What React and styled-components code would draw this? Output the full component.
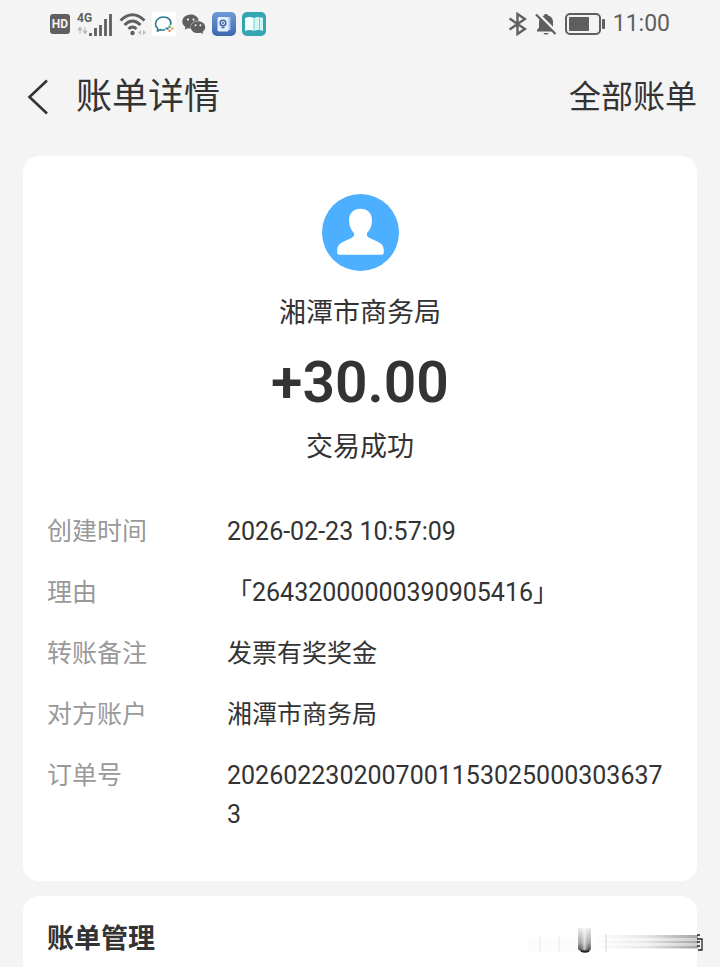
import React from 'react';
import styled, {createGlobalStyle} from 'styled-components';

const details = [
    {label: '创建时间', value: '2026-02-23 10:57:09'},
    {label: '理由', value: '「26432000000390905416」'},
    {label: '转账备注', value: '发票有奖奖金'},
    {label: '对方账户', value: '湘潭市商务局'},
    {label: '订单号', value: '20260223020070011530250003036373'},
]

function StatusBar() {
    return (
        <StatusWrapper>
            <IconGroup $gap={6}>
                <svg width="20" height="20" viewBox="0 0 20 20">
                    <rect width="20" height="20" rx="3" fill="#5f5f5f"/>
                    <text x="10" y="14" textAnchor="middle" fontSize="12" fontWeight="700" fill="#f4f4f4">HD</text>
                </svg>
                <svg width="36" height="24" viewBox="-1 0 36 24">
                    <text x="0" y="10" fontSize="12" fontWeight="700" fill="#5f5f5f">4G</text>
                    <path d="M1 18l2-3 2 3zM3 18v4M6 19l2 3 2-3zM8 19v-4" fill="#bbb" stroke="#bbb"/>
                    <path d="M13.5 21v3M18.5 16v8M23.5 13v11M28.5 7v17M33.5 2v22" stroke="#5f5f5f" strokeWidth="2.8"/>
                </svg>
                <svg width="28" height="24" viewBox="-1 0 28 24" fill="none">
                    <path d="M1.5 8.5Q13.5 -3 25.5 8.5M5.5 13Q13.5 5 21.5 13M9.5 17Q13.5 13 17.5 17" stroke="#5f5f5f" strokeWidth="2.8"/>
                    <circle cx="13.5" cy="21" r="2.2" fill="#5f5f5f"/>
                    <path d="M19 20.5l3-2.5v5zM27 20.5l-3-2.5v5z" fill="#bbb"/>
                </svg>
                <svg width="24" height="24" viewBox="0 0 24 24" fill="none">
                    <rect width="24" height="24" fill="#fff"/>
                    <path d="M18.5 13C20 8 16 5 11.500 5S3.500 8 3.500 12c0 2 1 3.500 2.200 4.500L5.500 19l3-1.300c1.500.4 3 .4 4.500.1" stroke="#2b7890" strokeWidth="1.600"/>
                    <path d="M17.500 13.500v2.500" stroke="#5aa63c" strokeWidth="2"/>
                    <path d="M13.500 16.500h3" stroke="#2b7890" strokeWidth="2"/>
                    <path d="M19 16.500h2.500" stroke="#e9a52c" strokeWidth="2"/>
                    <path d="M17.500 17.500v2.500" stroke="#e9823c" strokeWidth="2"/>
                </svg>
                <svg width="24" height="24" viewBox="1 0 24 24" fill="#5f5f5f">
                    <path d="M10 2.500C5 2.500 1.300 5.600 1.300 9.600c0 2.300 1.200 4.200 3.200 5.500l-.8 2.700 3.100-1.600c1 .3 2 .4 3 .4-1.200-4.600 2.700-8.200 8-8.200C17 5 14 2.500 10 2.500z"/>
                    <path d="M17 9.300c-4.200 0-7.200 2.600-7.200 5.900s3 5.900 7.200 5.900c.9 0 1.800-.1 2.600-.4l2.600 1.400-.6-2.300c1.600-1.100 2.600-2.700 2.600-4.600 0-3.300-3-5.900-7.200-5.900z"/>
                    <g fill="#f4f4f4">
                        <circle cx="7" cy="7.600" r="1.100"/>
                        <circle cx="12.500" cy="7.600" r="1.100"/>
                        <circle cx="14.600" cy="13.300" r="1"/>
                        <circle cx="19.400" cy="13.300" r="1"/>
                    </g>
                </svg>
                <svg width="24" height="24" viewBox="0 0 24 24">
                    <defs>
                        <linearGradient id="blueTile" x2="0" y2="1">
                            <stop stopColor="#6d9bd8"/>
                            <stop offset="1" stopColor="#3d67ad"/>
                        </linearGradient>
                    </defs>
                    <rect width="24" height="24" rx="5" fill="url(#blueTile)"/>
                    <path d="M16 5h2.500v13H16z" fill="#a9c6ee"/>
                    <rect x="5.500" y="5" width="11" height="14.500" rx="1.500" fill="#e4f0ff"/>
                    <circle cx="11" cy="11" r="2.800" fill="none" stroke="#3f65a5" strokeWidth="1.500"/>
                    <path d="M9.500 15.500h3M10 11h2" stroke="#3f65a5" strokeWidth="1.300"/>
                </svg>
                <svg width="24" height="24" viewBox="0 0 24 24">
                    <rect width="24" height="24" rx="5" fill="#35a5b2"/>
                    <path d="M3 6c3-1.500 6-1.500 9 0v13c-3-1.200-6-1.200-9 0z" fill="#f3fffd"/>
                    <path d="M12 6c3-1.500 6-1.500 9 0v13c-3-1.200-6-1.200-9 0z" fill="#d5f7f4"/>
                    <path d="M12 6v13M17.500 5v13" stroke="#77cfd0"/>
                </svg>
            </IconGroup>
            <IconGroup $gap={8}>
                <svg width="20" height="24" viewBox="0 0 20 24" fill="none" stroke="#5f5f5f" strokeWidth="2.400">
                    <path d="M2.500 6.500L18 17l-7.500 5V2L18 7 2.500 17.500"/>
                </svg>
                <svg width="22" height="24" viewBox="0 0 22 24">
                    <path d="M2 19.500v-1.600l2-2.400V10c0-3.500 2-5.800 5-6.500C9 1.500 13 1.500 13 3.500c3 .7 5 3 5 6.500v5.500l2 2.400v1.600z" fill="#5f5f5f"/>
                    <path d="M8.500 21h5c-.5 2-4.500 2-5 0z" fill="#5f5f5f"/>
                    <path d="M3 1.500L22 20.500" stroke="#f4f4f4" strokeWidth="2.500"/>
                    <path d="M1 2.500L20.500 22" stroke="#5f5f5f" strokeWidth="2.200"/>
                </svg>
                <svg width="40" height="22" viewBox="0 0 40 22">
                    <rect x="1" y="1" width="34" height="20" rx="4" fill="none" stroke="#5f5f5f" strokeWidth="2"/>
                    <rect x="4" y="4" width="20" height="14" rx="1" fill="#5f5f5f"/>
                    <rect x="37" y="6" width="3" height="10" rx="1" fill="#5f5f5f"/>
                </svg>
                <Clock>11:00</Clock>
            </IconGroup>
        </StatusWrapper>
    )
}

function Navbar() {
    return (
        <NavWrapper>
            <BackButton type="button" aria-label="返回">
                <svg width="22" height="36" viewBox="0 0 22 36" fill="none" stroke="#333" strokeWidth="2.600">
                    <path d="M20 1.500L2.500 18 20 34.500"/>
                </svg>
            </BackButton>
            <Title>账单详情</Title>
            <AllBills href="#bills">全部账单</AllBills>
        </NavWrapper>
    )
}

function Avatar() {
    return (
        <svg width="77" height="77" viewBox="0 0 76 76">
            <circle cx="38" cy="38" r="38" fill="#4dafff"/>
            <path d="M38 14.500c-7 0-11.300 4.500-11.300 11.500 0 5.500 1.800 9.500 4.800 12.500.8 2.500-.5 4-3 5.200l-7 3.300c-4.500 2-6.500 4.500-6.500 9v2q0 2 2 2h42q2 0 2-2v-2c0-4.500-2-7-6.500-9l-7-3.300c-2.500-1.200-3.800-2.700-3-5.200 3-3 4.800-7 4.800-12.500 0-7-4.300-11.500-11.300-11.500z" fill="#fff"/>
        </svg>
    )
}

// faded strip in the corner of the last card
function Smudge() {
    return (
        <SmudgeSvg width="176" height="26" viewBox="0 0 176 26" aria-hidden="true">
            <defs>
                <linearGradient id="streak">
                    <stop stopColor="#777" stopOpacity="0"/>
                    <stop offset="0.5" stopColor="#777" stopOpacity="0.2"/>
                    <stop offset="1" stopColor="#666" stopOpacity="0.8"/>
                </linearGradient>
                <linearGradient id="column" x2="0" y2="1">
                    <stop stopColor="#555" stopOpacity="0.1"/>
                    <stop offset="0.6" stopColor="#555" stopOpacity="0.5"/>
                    <stop offset="1" stopColor="#222" stopOpacity="0.9"/>
                </linearGradient>
                <linearGradient id="shine">
                    <stop stopColor="#fff" stopOpacity="0"/>
                    <stop offset="0.5" stopColor="#fff" stopOpacity="0.6"/>
                    <stop offset="1" stopColor="#fff" stopOpacity="0"/>
                </linearGradient>
            </defs>
            <path d="M0 10h50v14H0z" fill="#777" opacity="0.02"/>
            <path d="M12 8v16M31 8v16" stroke="#777" strokeWidth="2" opacity="0.06"/>
            <path d="M50 0h13v21q-1 3-6 3t-7-3z" fill="url(#column)"/>
            <path d="M53 0h7v22h-7z" fill="url(#shine)"/>
            <path d="M53 23q4 2 8 0" stroke="#222" strokeWidth="1.500" fill="none"/>
            <path d="M78 6v18" stroke="#777" strokeWidth="2" opacity="0.15"/>
            <path d="M66 7h104v14H66z" fill="url(#streak)" opacity="0.4"/>
            <path d="M66 7h104v3H66zM66 13h104v2H66zM66 18h104v2H66z" fill="url(#streak)" opacity="0.5"/>
            <path d="M169 7h3M169 11h5v11h-4M169 14h3M169 18h3" fill="none" stroke="#222" strokeWidth="1.300"/>
        </SmudgeSvg>
    )
}

export default function App() {
    return (
        <Page>
            <GlobalStyle/>
            <StatusBar/>
            <Navbar/>
            <BillCard>
                <Summary>
                    <Avatar/>
                    <Payee>湘潭市商务局</Payee>
                    <Amount>+30.00</Amount>
                    <Result>交易成功</Result>
                </Summary>
                <DetailList>
                    {details.map(item => (
                        <DetailRow key={item.label}>
                            <dt>{item.label}</dt>
                            <dd>{item.value}</dd>
                        </DetailRow>
                    ))}
                </DetailList>
            </BillCard>
            <ManageCard>
                <SectionTitle>账单管理</SectionTitle>
                <Smudge/>
            </ManageCard>
        </Page>
    )
}

const GlobalStyle = createGlobalStyle`
    * {
        box-sizing: border-box;
        margin: 0;
    }
    body {
        background: #f4f4f4;
        color: #333;
        font-family: Roboto, "Noto Sans CJK SC", sans-serif;
    }
    svg {
        display: block;
        flex: none;
    }
`

const Page = styled.main`
    display: flex;
    flex-direction: column;
    min-height: 100vh;
`

const StatusWrapper = styled.div`
    display: flex;
    align-items: center;
    justify-content: space-between;
    height: 48px;
    padding: 0 50px;
`

const IconGroup = styled.div`
    display: flex;
    align-items: center;
    gap: ${props => props.$gap}px;
`

const Clock = styled.time`
    color: #5f5f5f;
    font-size: 23px;
    line-height: 28px;
`

const NavWrapper = styled.header`
    display: flex;
    align-items: center;
    height: 98px;
    padding: 0 23px 0 27px;
    margin-bottom: 10px;
`

const BackButton = styled.button`
    padding: 0;
    border: 0;
    background: none;
    cursor: pointer;
`

const Title = styled.h1`
    flex: 1;
    margin-left: 27px;
    font-size: 36px;
    font-weight: 400;
    line-height: 48px;
`

const AllBills = styled.a`
    color: inherit;
    font-size: 32px;
    line-height: 48px;
    text-decoration: none;
`

const Card = styled.section`
    margin: 0 23px;
    background: #fff;
    border-radius: 16px;
`

const BillCard = styled(Card)`
    padding: 38px 24px 47px;
    margin-bottom: 15px;
`

const ManageCard = styled(Card)`
    position: relative;
    flex: 1;
    padding: 23px 24px 8px;
    border-radius: 16px 16px 0 0;
`

const Summary = styled.div`
    display: flex;
    flex-direction: column;
    align-items: center;
`

const Payee = styled.h2`
    margin-top: 22px;
    font-size: 27px;
    font-weight: 400;
    line-height: 40px;
`

const Amount = styled.p`
    margin-top: 20px;
    font-size: 57px;
    font-weight: 600;
    line-height: 60px;
`

const Result = styled.p`
    margin-top: 14px;
    font-size: 27px;
    line-height: 40px;
`

const DetailList = styled.dl`
    display: grid;
    gap: 22px;
    margin-top: 45px;
`

const DetailRow = styled.div`
    display: grid;
    grid-template-columns: 180px 1fr;
    font-size: 25px;
    line-height: 39px;

    dt {
        color: #999;
    }

    dd {
        word-break: break-all;
    }
`

const SectionTitle = styled.h2`
    font-size: 27px;
    font-weight: 700;
    line-height: 40px;
`

const SmudgeSvg = styled.svg`
    position: absolute;
    top: 32px;
    right: -7px;
`
